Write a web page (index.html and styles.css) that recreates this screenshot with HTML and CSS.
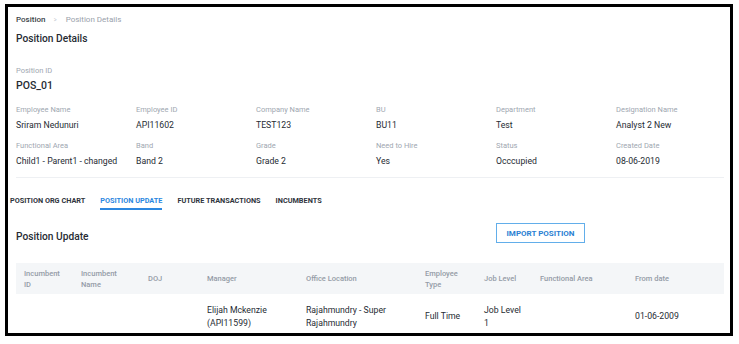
FILE: index.html
```html
<!DOCTYPE html>
<html lang="en">
<head>
    <meta charset="UTF-8">
    <meta name="viewport" content="width=device-width, initial-scale=1.0">
    <title>Position Details</title>
    <link rel="stylesheet" href="styles.css">
</head>
<body>
    <main class="frame">
        <nav class="breadcrumb">
            <span class="crumb_root">Position</span>
            <span class="crumb_sep">&gt;</span>
            <span class="crumb_current">Position Details</span>
        </nav>
        <h1 class="page_title">Position Details</h1>

        <div class="field id_field">
            <span class="label">Position ID</span>
            <span class="value big">POS_01</span>
        </div>

        <div class="details">
            <div class="field"><span class="label">Employee Name</span><span class="value">Sriram Nedunuri</span></div>
            <div class="field"><span class="label">Employee ID</span><span class="value">API11602</span></div>
            <div class="field"><span class="label">Company Name</span><span class="value">TEST123</span></div>
            <div class="field"><span class="label">BU</span><span class="value">BU11</span></div>
            <div class="field"><span class="label">Department</span><span class="value">Test</span></div>
            <div class="field"><span class="label">Designation Name</span><span class="value">Analyst 2 New</span></div>
            <div class="field"><span class="label">Functional Area</span><span class="value">Child1 - Parent1 - changed</span></div>
            <div class="field"><span class="label">Band</span><span class="value">Band 2</span></div>
            <div class="field"><span class="label">Grade</span><span class="value">Grade 2</span></div>
            <div class="field"><span class="label">Need to Hire</span><span class="value">Yes</span></div>
            <div class="field"><span class="label">Status</span><span class="value">Occcupied</span></div>
            <div class="field"><span class="label">Created Date</span><span class="value">08-06-2019</span></div>
        </div>

        <hr class="divider">

        <div class="tabs">
            <span class="tab">POSITION ORG CHART</span>
            <span class="tab active">POSITION UPDATE</span>
            <span class="tab">FUTURE TRANSACTIONS</span>
            <span class="tab">INCUMBENTS</span>
        </div>

        <div class="section_head">
            <h2 class="section_title">Position Update</h2>
            <button class="btn_import">IMPORT POSITION</button>
        </div>

        <div class="table">
            <div class="row head">
                <span>Incumbent<br>ID</span>
                <span>Incumbent<br>Name</span>
                <span>DOJ</span>
                <span>Manager</span>
                <span>Office Location</span>
                <span>Employee<br>Type</span>
                <span>Job Level</span>
                <span>Functional Area</span>
                <span>From date</span>
            </div>
            <div class="row body">
                <span></span>
                <span></span>
                <span></span>
                <span>Elijah Mckenzie<br>(API11599)</span>
                <span>Rajahmundry - Super<br>Rajahmundry</span>
                <span>Full Time</span>
                <span>Job Level<br>1</span>
                <span></span>
                <span>01-06-2009</span>
            </div>
        </div>
    </main>
</body>
</html>
```

FILE: styles.css
```css
* {
    margin: 0;
    padding: 0;
    box-sizing: border-box;
}

body {
    background-color: #fff;
    color: #262b33;
    font-family: Roboto, "Liberation Sans", sans-serif;
}

.frame {
    display: block;
    margin: 4px 0 0 5px;
    width: 728px;
    height: 332px;
    border: 3px solid #000;
    overflow: hidden;
    padding: 0 6px 0 8px;
}

.breadcrumb {
    margin-top: 6px;
    font-size: 8px;
    line-height: 14px;
    display: flex;
    gap: 8px;
}

.crumb_root {
    color: #3a3f47;
    font-weight: 500;
}

.crumb_sep {
    color: #c4c9d0;
    transform: scaleX(0.7);
}

.crumb_current {
    color: #9aa1ab;
}

.page_title {
    margin-top: 4px;
    font-size: 10.2px;
    line-height: 15px;
    font-weight: 500;
    color: #262b33;
}

.field {
    display: flex;
    flex-direction: column;
    gap: 2px;
}

.label {
    font-size: 7.5px;
    line-height: 12px;
    color: #a0a7b1;
}

.value {
    font-size: 8.7px;
    line-height: 14px;
    color: #262b33;
}

.value.big {
    font-size: 10.5px;
    font-weight: 500;
}

.id_field {
    margin-top: 19px;
}

.details {
    margin-top: 11px;
    display: grid;
    grid-template-columns: repeat(6, 120px);
    row-gap: 8px;
}

.divider {
    margin-top: 9px;
    border: none;
    border-top: 1px solid #eef0f3;
}

.tabs {
    margin: 16px 0 0 -6px;
    display: flex;
    gap: 15px;
}

.tab {
    font-size: 7.3px;
    font-weight: 700;
    line-height: 13px;
    color: #2f343c;
    padding-bottom: 1px;
    border-bottom: 2px solid transparent;
}

.tab.active {
    color: #2b87e0;
    border-bottom-color: #2b87e0;
}

.section_head {
    margin-top: 13px;
    display: grid;
    grid-template-columns: 480px auto;
    align-items: start;
}

.section_title {
    margin-top: 6px;
    font-size: 10.2px;
    line-height: 15px;
    font-weight: 500;
}

.btn_import {
    width: 89px;
    height: 20px;
    background-color: #fff;
    border: 1px solid #62aeea;
    color: #2b7fd2;
    font-family: Roboto, "Liberation Sans", sans-serif;
    font-size: 8px;
    font-weight: 700;
}

.table {
    margin-top: 19px;
}

.row {
    display: grid;
    grid-template-columns: 57px 67px 59px 99px 119px 59px 56px 95px 97px;
    align-items: center;
}

.row span {
    padding-left: 8px;
}

.row.head {
    height: 31px;
    background-color: #f4f6f8;
    font-size: 7.5px;
    font-weight: 500;
    line-height: 11px;
    color: #959ca7;
}

.row.body {
    height: 45px;
    font-size: 8.7px;
    line-height: 13px;
    color: #262b33;
}
```
